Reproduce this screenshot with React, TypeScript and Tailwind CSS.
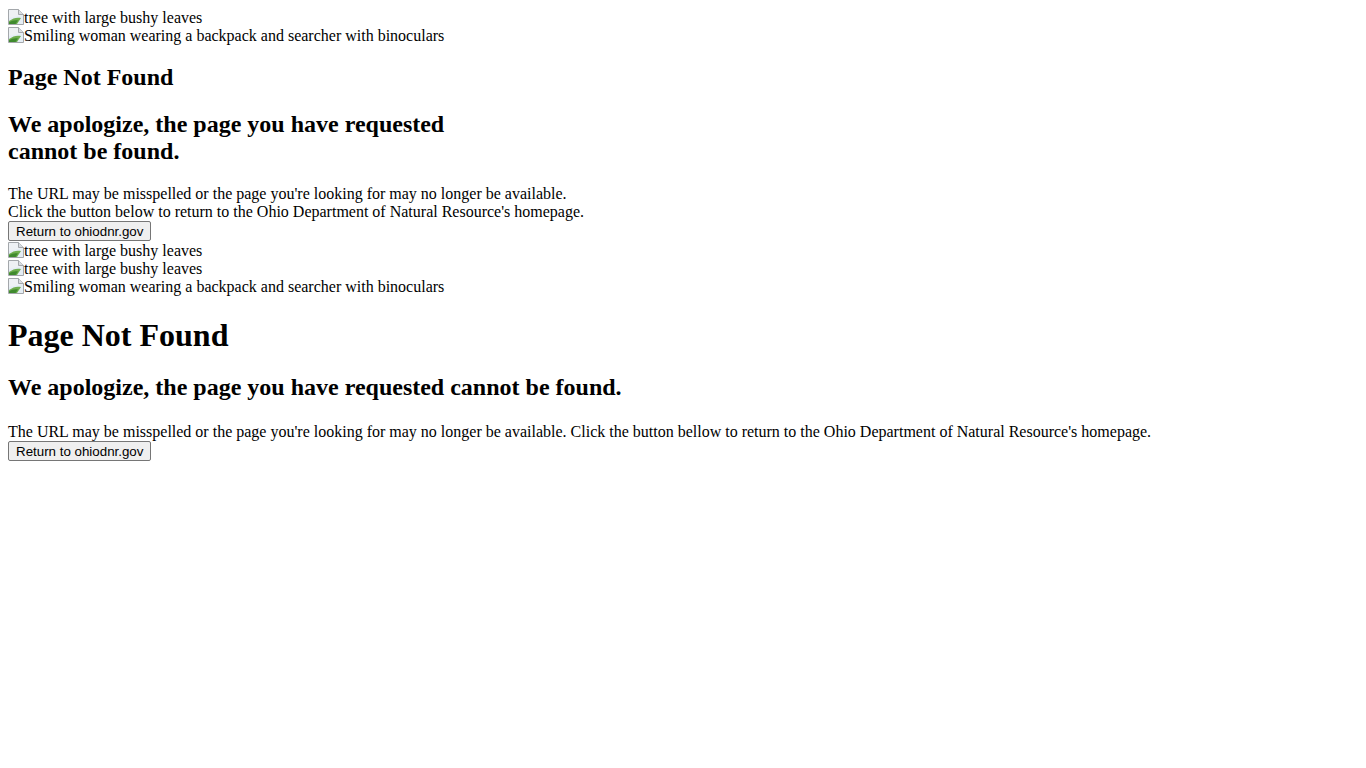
const serif = { fontFamily: '"Liberation Serif", "Times New Roman", serif' };

function BrokenIcon() {
  return (
    <svg width="16" height="16" viewBox="0 0 16 16" className="mt-px shrink-0">
      <path d="M0.5 0.5 H10.5 L15.5 5.5 V15.5 H0.5 Z" fill="#eef1f4" stroke="#a3a7ab" />
      <path d="M10.5 0.5 V5.5 H15.5" fill="#d9dde1" stroke="#a3a7ab" />
      <path d="M1 15 V9 L15 6 V15 Z" fill="#e4edf5" />
      <path d="M1 15 V12 C5 9 9 8 13 9 L9 15 Z" fill="#6fae4e" />
      <path d="M1 15 V13.5 C4 11.5 7 11 10 11.5 L7.5 15 Z" fill="#3f8a2e" />
    </svg>
  );
}

function BrokenImage({ alt }: { alt: string }) {
  return (
    <div className="flex h-[18px] items-start">
      <BrokenIcon />
      <span className="leading-[20px]">{alt}</span>
    </div>
  );
}

function ReturnButton({ offset }: { offset?: boolean }) {
  return (
    <button
      type="button"
      className={`block h-[20px] rounded-[2px] border border-[#767676] bg-[#efefef] px-[7px] text-[13.333px] leading-[normal] text-black ${offset ? "mt-[0.5px]" : ""}`}
      style={{ fontFamily: '"Liberation Sans", Arial, sans-serif' }}
    >
      Return to ohiodnr.gov
    </button>
  );
}

export default function App() {
  return (
    <div className="min-h-screen bg-white p-2 text-[16px] leading-[normal] text-black" style={serif}>
      <section>
        <BrokenImage alt="tree with large bushy leaves" />
        <BrokenImage alt="Smiling woman wearing a backpack and searcher with binoculars" />
        <h2 className="my-[19.92px] text-[24px] font-bold leading-[normal]">Page Not Found</h2>
        <h2 className="my-[19.92px] text-[24px] font-bold leading-[normal]">
          We apologize, the page you have requested
          <br />
          cannot be found.
        </h2>
        <p className="mt-4">
          The URL may be misspelled or the page you're looking for may no longer be available.
          <br />
          Click the button below to return to the Ohio Department of Natural Resource's homepage.
        </p>
        <ReturnButton offset />
      </section>

      <section>
        <BrokenImage alt="tree with large bushy leaves" />
        <BrokenImage alt="tree with large bushy leaves" />
        <BrokenImage alt="Smiling woman wearing a backpack and searcher with binoculars" />
        <h1 className="mt-[21.44px] mb-[20.44px] text-[32px] font-bold leading-[normal]">Page Not Found</h1>
        <h2 className="mt-[19.92px] text-[24px] font-bold leading-[normal]">
          We apologize, the page you have requested cannot be found.
        </h2>
        <p className="mt-[22px]">
          The URL may be misspelled or the page you're looking for may no longer be available. Click the
          button bellow to return to the Ohio Department of Natural Resource's homepage.
        </p>
        <ReturnButton />
      </section>
    </div>
  );
}
